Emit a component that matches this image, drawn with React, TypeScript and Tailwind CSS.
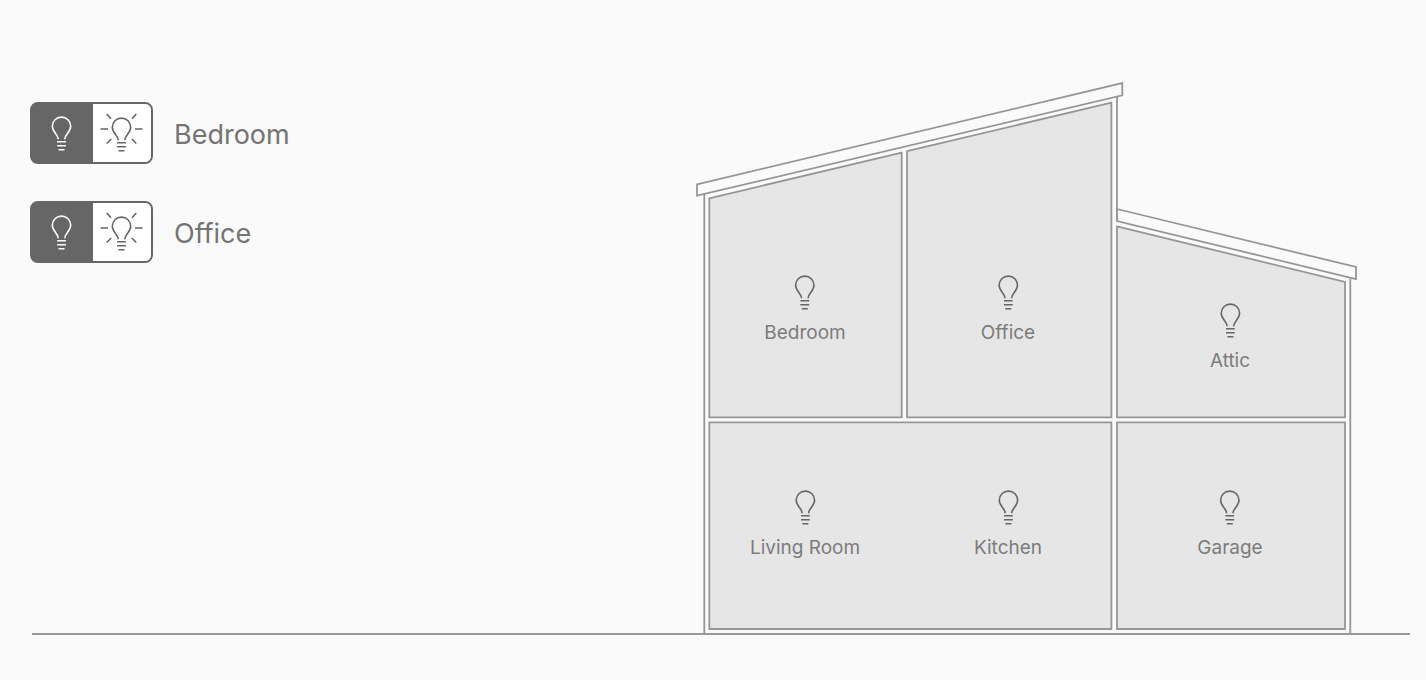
import { useState } from "react";

const BULB =
  "M7.3 23.3C7.3 18.4 1.3 16.2 1.3 10.3A9.2 9.2 0 0 1 19.7 10.3C19.7 16.2 13.7 18.4 13.7 23.3";
const BULB_BASE = "M6.1 25.7H14.9M6.1 29.7H14.9M7.5 33.7H13.5";

function Bulb() {
  return (
    <svg
      aria-hidden="true"
      className="h-9 w-[21px]"
      viewBox="0 0 21 36"
      fill="none"
      stroke="currentColor"
      strokeWidth="1.6"
    >
      <path d={BULB} />
      <path d={BULB_BASE} />
    </svg>
  );
}

function LitBulb() {
  return (
    <svg
      aria-hidden="true"
      className="h-10 w-[43px]"
      viewBox="0 0 43 40"
      fill="none"
      stroke="currentColor"
      strokeWidth="1.6"
    >
      <g transform="translate(11 4)">
        <path d={BULB} />
        <path d={BULB_BASE} />
      </g>
      <path d="M.5 16H8M35 16H42.5M6.7 1 11 5.7M36.3 1 32 5.7M11.2 26 6.7 30.5M31.8 26 36.3 30.5" />
    </svg>
  );
}

function LightSwitch({ name }: { name: string }) {
  const [on, setOn] = useState(false);
  return (
    <div className="flex items-center gap-[21px]">
      <div
        role="group"
        aria-label={name}
        className="flex h-[62px] w-[123px] rounded-lg border-2 border-[#666] bg-linear-to-r from-[#666] from-50% to-white to-50% text-[#666]"
      >
        <button
          type="button"
          aria-label={`Turn ${name} light off`}
          aria-pressed={!on}
          onClick={() => setOn(false)}
          className="flex flex-1 items-center justify-center rounded-l-md bg-[#666] pt-0.5 pr-0.5 text-white"
        >
          <Bulb />
        </button>
        <button
          type="button"
          aria-label={`Turn ${name} light on`}
          aria-pressed={on}
          onClick={() => setOn(true)}
          className="flex w-[58px] items-center justify-center rounded-r-md bg-white pr-0.5"
        >
          <LitBulb />
        </button>
      </div>
      <span className="pt-1 text-[27px] leading-8 text-[#747474]">{name}</span>
    </div>
  );
}

const ROOMS = [
  { name: "Bedroom", place: "left-[109px] top-[193px]" },
  { name: "Office", place: "left-[312px] top-[193px]" },
  { name: "Attic", place: "left-[534px] top-[221px]" },
  { name: "Living Room", place: "left-[109px] top-[408px]" },
  { name: "Kitchen", place: "left-[312px] top-[408px]" },
  { name: "Garage", place: "left-[534px] top-[408px]" },
];

function House() {
  return (
    <div className="relative h-[552px] w-[662px] shrink-0">
      <svg
        aria-hidden="true"
        className="block h-full w-full"
        viewBox="0 0 662 552"
        fill="none"
        stroke="#969696"
        strokeWidth="1.8"
      >
        <path d="M8.3 552V111.5M421 139V14M654.3 552V197" />
        <path d="M1 102.3 426.3 1V13.3L1 113.7Z" />
        <path d="M421 127 660 185V197L421 139Z" />
        <g fill="#e6e6e6">
          <path d="M13.3 116.3 205.7 70.6V335.3H13.3Z" />
          <path d="M211 69.2 415.4 20.6V335.3H211Z" />
          <path d="M421 144.3 649 200V335.3H421Z" />
          <path d="M13.3 340.4H415.4V547H13.3Z" />
          <path d="M421 340.4H649V547H421Z" />
        </g>
      </svg>
      {ROOMS.map((room) => (
        <div
          key={room.name}
          className={`absolute flex -translate-x-1/2 flex-col items-center gap-2.5 whitespace-nowrap text-[#666] ${room.place}`}
        >
          <Bulb />
          <span className="text-[19px] leading-6 text-[#7c7c7c]">{room.name}</span>
        </div>
      ))}
    </div>
  );
}

export default function App() {
  return (
    <main className="min-h-screen bg-[#fafafa] pt-[82px] pr-4 pb-11 pl-[30px] font-['Inter',sans-serif]">
      <div className="flex justify-between pr-[52px]">
        <section aria-label="Lights" className="flex flex-col gap-[37px] pt-5">
          <LightSwitch name="Bedroom" />
          <LightSwitch name="Office" />
        </section>
        <House />
      </div>
      <hr className="-mt-px ml-0.5 border-t-2 border-[#999]" />
    </main>
  );
}
